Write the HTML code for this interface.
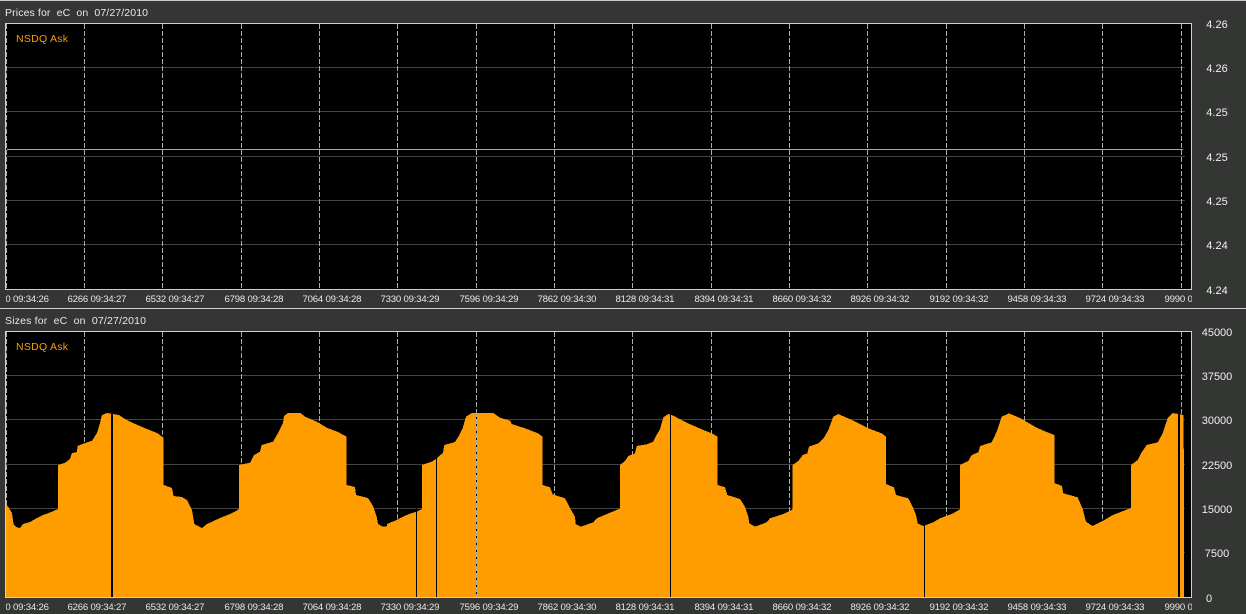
<!DOCTYPE html>
<html>
<head>
<meta charset="utf-8">
<title>Prices and Sizes</title>
<style>
html,body{margin:0;padding:0;background:#343634;width:1246px;height:614px;overflow:hidden}
svg{display:block}
text{font-family:"Liberation Sans",sans-serif}
.t{font-size:10.5px;fill:#e8e8e8}
.x{font-size:9.6px;fill:#e8e8e8}
.y{font-size:11px;fill:#f0f0f0;text-anchor:middle}
.n{font-size:10.5px;fill:#ff9c00}
.g line{stroke:#444;stroke-width:1}
.v line{stroke:#aaa;stroke-width:1;stroke-dasharray:5 2}
</style>
</head>
<body>
<svg width="1246" height="614" viewBox="0 0 1246 614" xmlns="http://www.w3.org/2000/svg">
<rect x="0" y="0" width="1246" height="614" fill="#343634"/>
<g shape-rendering="crispEdges">
<rect x="0" y="0" width="1246" height="1" fill="#c8c8c8"/>
<rect x="0" y="308" width="1246" height="1" fill="#d0d0d0"/>
<!-- panel 1 -->
<rect x="5.5" y="23.5" width="1186" height="266" fill="#000" stroke="#cfcfcf"/>
<g class="g">
<line x1="6" x2="1185" y1="67.5" y2="67.5"/><line x1="6" x2="1185" y1="111.5" y2="111.5"/><line x1="6" x2="1185" y1="156.5" y2="156.5"/><line x1="6" x2="1185" y1="200.5" y2="200.5"/><line x1="6" x2="1185" y1="244.5" y2="244.5"/>
</g>
<g class="v">
<line x1="6.5" x2="6.5" y1="24" y2="289"/><line x1="84.5" x2="84.5" y1="24" y2="289"/><line x1="162.5" x2="162.5" y1="24" y2="289"/><line x1="241.5" x2="241.5" y1="24" y2="289"/><line x1="319.5" x2="319.5" y1="24" y2="289"/><line x1="397.5" x2="397.5" y1="24" y2="289"/><line x1="476.5" x2="476.5" y1="24" y2="289"/><line x1="554.5" x2="554.5" y1="24" y2="289"/><line x1="632.5" x2="632.5" y1="24" y2="289"/><line x1="711.5" x2="711.5" y1="24" y2="289"/><line x1="789.5" x2="789.5" y1="24" y2="289"/><line x1="867.5" x2="867.5" y1="24" y2="289"/><line x1="946.5" x2="946.5" y1="24" y2="289"/><line x1="1024.5" x2="1024.5" y1="24" y2="289"/><line x1="1102.5" x2="1102.5" y1="24" y2="289"/><line x1="1181.5" x2="1181.5" y1="24" y2="289"/>
</g>
<line x1="7" x2="1183" y1="149.5" y2="149.5" stroke="#ff9c00"/>
<!-- panel 2 -->
<rect x="5.5" y="331.5" width="1186" height="266" fill="#000" stroke="#cfcfcf"/>
<g class="g">
<line x1="6" x2="1185" y1="375.5" y2="375.5"/><line x1="6" x2="1185" y1="419.5" y2="419.5"/><line x1="6" x2="1185" y1="464.5" y2="464.5"/><line x1="6" x2="1185" y1="508.5" y2="508.5"/><line x1="6" x2="1185" y1="552.5" y2="552.5"/>
</g>
<g class="v">
<line x1="6.5" x2="6.5" y1="332" y2="597"/><line x1="84.5" x2="84.5" y1="332" y2="597"/><line x1="162.5" x2="162.5" y1="332" y2="597"/><line x1="241.5" x2="241.5" y1="332" y2="597"/><line x1="319.5" x2="319.5" y1="332" y2="597"/><line x1="397.5" x2="397.5" y1="332" y2="597"/><line x1="476.5" x2="476.5" y1="332" y2="597"/><line x1="554.5" x2="554.5" y1="332" y2="597"/><line x1="632.5" x2="632.5" y1="332" y2="597"/><line x1="711.5" x2="711.5" y1="332" y2="597"/><line x1="789.5" x2="789.5" y1="332" y2="597"/><line x1="867.5" x2="867.5" y1="332" y2="597"/><line x1="946.5" x2="946.5" y1="332" y2="597"/><line x1="1024.5" x2="1024.5" y1="332" y2="597"/><line x1="1102.5" x2="1102.5" y1="332" y2="597"/><line x1="1181.5" x2="1181.5" y1="332" y2="597"/>
</g>
<polygon fill="#ff9c00" points="6,597 6,504 9,508 12,513 13.5,524 16,527 20,528 23,524 30,522 37,518 43,515 52,511.7 58,509 58,465 65,462.7 70,459 72,453 77,452 77.5,446 85,443 92,440.7 97,433 100,423 102,415 107,413 119,415 125,419 133,423 147,429 157,433 163.7,437.7 163.7,485 172,488 173.5,496 182,497 187,500 192,510 194.3,524 202,528 207,524 220,518 230,514 236,511 239,509 239,465 250,462.7 251,461 254,455 260,451.7 261.7,445 273,441.7 278,433 283,423 284,416 288,413 300.7,413 305,416.7 316.7,421.7 326.7,427.7 338,432 346.7,436.7 346.7,485 355,487 356,495 368,498 373,506 376.7,516.7 378,524 382.7,526.7 386.7,526.7 387,524 396.7,520 406.7,515 413,512.7 418,511 422,509 422,465 431.7,461.7 436,459 443,452.7 444.3,445 455,442 458.3,436.7 462.7,428 466,416.7 471.7,413 493.3,413 500,417.7 510,420.7 511.7,424 525,428.3 538,433.3 542.7,436.7 542.7,485 550,487.3 552.7,494.3 565,498.3 570,508 575,516.7 575.7,524 580.7,526.7 593.3,522.3 596.7,518.3 610,512.7 618.3,509.3 620,509 620,465 625,461 628.3,456 635,453.3 636.7,446 646.7,444.3 653.3,441.7 655,437.7 660,429.3 663.3,417.3 668.3,414 673.3,415.7 686.7,422.7 701.7,429.3 711.7,433.3 717.7,436.7 717.7,485 725,487.3 727.3,495 740,499 745,506.7 748.3,516.7 749.3,523.3 755,526.7 766.7,522.3 770,518.3 783.3,514 792.7,509.3 792.7,465 798.3,461 802.7,455 807.3,453.3 809,446.7 818.3,443.3 824,437.7 828.3,430 833.3,416.7 838.3,414 853.3,420.7 868.3,428.3 881.7,433.3 886,436.7 886,484 894,487.3 896,495 908.3,498.3 912.7,506.7 916,515 917.7,523.3 923.3,526 933.3,522.3 940,518.3 953.3,513.3 960,509.3 960,465 968.3,461 971.7,455 978.3,452.3 980,446 991.7,442.3 996.7,431.7 1001.7,416.7 1009,413.3 1020,418 1036,427.3 1044.3,431 1054.3,435 1054.3,483 1062,486 1063.3,493.3 1077.7,497.3 1082.7,509 1086,521.7 1092.7,526 1102.7,521 1112.7,515 1131,508 1131,465 1137.7,460 1141,453.3 1146.7,445 1157.7,442.3 1162.7,433.3 1167.7,418.3 1172.7,413 1183.7,415 1184,597"/>
<rect x="111" y="412" width="2" height="185" fill="#000"/>
<rect x="416" y="500" width="1" height="97" fill="#000"/>
<rect x="436" y="450" width="1" height="147" fill="#000"/>
<rect x="476" y="412" width="1" height="185" fill="#000"/>
<line x1="476.5" x2="476.5" y1="412" y2="597" stroke="#aaa" stroke-dasharray="5 2"/>
<rect x="670" y="412" width="1" height="185" fill="#000"/>
<rect x="924" y="525" width="1" height="72" fill="#000"/>
<rect x="1178" y="412" width="2" height="185" fill="#000"/>
</g>
<text class="t" x="5" y="16" textLength="143" lengthAdjust="spacing" xml:space="preserve">Prices for  eC  on  07/27/2010</text>
<text class="t" x="5" y="324" textLength="141" lengthAdjust="spacing" xml:space="preserve">Sizes for  eC  on  07/27/2010</text>
<text class="n" x="16" y="42" textLength="52" lengthAdjust="spacing">NSDQ Ask</text>
<text class="n" x="16" y="350" textLength="52" lengthAdjust="spacing">NSDQ Ask</text>
<text class="y" x="1217" y="28">4.26</text>
<text class="y" x="1217" y="72">4.26</text>
<text class="y" x="1217" y="116">4.25</text>
<text class="y" x="1217" y="161">4.25</text>
<text class="y" x="1217" y="205">4.25</text>
<text class="y" x="1217" y="249">4.24</text>
<text class="y" x="1217" y="294">4.24</text>
<text class="y" x="1217" y="336">45000</text>
<text class="y" x="1217" y="380">37500</text>
<text class="y" x="1217" y="424">30000</text>
<text class="y" x="1217" y="469">22500</text>
<text class="y" x="1217" y="513">15000</text>
<text class="y" x="1217" y="557">7500</text>
<text class="y" x="1209" y="602">0</text>
<svg x="6" y="290" width="1186" height="18" viewBox="6 290 1186 18">
<text class="x" x="-10" y="302" textLength="59" lengthAdjust="spacing">6000 09:34:26</text>
<text class="x" x="67.5" y="302" textLength="59" lengthAdjust="spacing">6266 09:34:27</text>
<text class="x" x="145.5" y="302" textLength="59" lengthAdjust="spacing">6532 09:34:27</text>
<text class="x" x="224.5" y="302" textLength="59" lengthAdjust="spacing">6798 09:34:28</text>
<text class="x" x="302.5" y="302" textLength="59" lengthAdjust="spacing">7064 09:34:28</text>
<text class="x" x="380.5" y="302" textLength="59" lengthAdjust="spacing">7330 09:34:29</text>
<text class="x" x="459.5" y="302" textLength="59" lengthAdjust="spacing">7596 09:34:29</text>
<text class="x" x="537.5" y="302" textLength="59" lengthAdjust="spacing">7862 09:34:30</text>
<text class="x" x="615.5" y="302" textLength="59" lengthAdjust="spacing">8128 09:34:31</text>
<text class="x" x="694.5" y="302" textLength="59" lengthAdjust="spacing">8394 09:34:31</text>
<text class="x" x="772.5" y="302" textLength="59" lengthAdjust="spacing">8660 09:34:32</text>
<text class="x" x="850.5" y="302" textLength="59" lengthAdjust="spacing">8926 09:34:32</text>
<text class="x" x="929.5" y="302" textLength="59" lengthAdjust="spacing">9192 09:34:32</text>
<text class="x" x="1007.5" y="302" textLength="59" lengthAdjust="spacing">9458 09:34:33</text>
<text class="x" x="1085.5" y="302" textLength="59" lengthAdjust="spacing">9724 09:34:33</text>
<text class="x" x="1164.5" y="302" textLength="59" lengthAdjust="spacing">9990 09:34:33</text>
</svg>
<svg x="6" y="598" width="1186" height="16" viewBox="6 598 1186 16">
<text class="x" x="-10" y="610" textLength="59" lengthAdjust="spacing">6000 09:34:26</text>
<text class="x" x="67.5" y="610" textLength="59" lengthAdjust="spacing">6266 09:34:27</text>
<text class="x" x="145.5" y="610" textLength="59" lengthAdjust="spacing">6532 09:34:27</text>
<text class="x" x="224.5" y="610" textLength="59" lengthAdjust="spacing">6798 09:34:28</text>
<text class="x" x="302.5" y="610" textLength="59" lengthAdjust="spacing">7064 09:34:28</text>
<text class="x" x="380.5" y="610" textLength="59" lengthAdjust="spacing">7330 09:34:29</text>
<text class="x" x="459.5" y="610" textLength="59" lengthAdjust="spacing">7596 09:34:29</text>
<text class="x" x="537.5" y="610" textLength="59" lengthAdjust="spacing">7862 09:34:30</text>
<text class="x" x="615.5" y="610" textLength="59" lengthAdjust="spacing">8128 09:34:31</text>
<text class="x" x="694.5" y="610" textLength="59" lengthAdjust="spacing">8394 09:34:31</text>
<text class="x" x="772.5" y="610" textLength="59" lengthAdjust="spacing">8660 09:34:32</text>
<text class="x" x="850.5" y="610" textLength="59" lengthAdjust="spacing">8926 09:34:32</text>
<text class="x" x="929.5" y="610" textLength="59" lengthAdjust="spacing">9192 09:34:32</text>
<text class="x" x="1007.5" y="610" textLength="59" lengthAdjust="spacing">9458 09:34:33</text>
<text class="x" x="1085.5" y="610" textLength="59" lengthAdjust="spacing">9724 09:34:33</text>
<text class="x" x="1164.5" y="610" textLength="59" lengthAdjust="spacing">9990 09:34:33</text>
</svg>
</svg>
</body>
</html>
